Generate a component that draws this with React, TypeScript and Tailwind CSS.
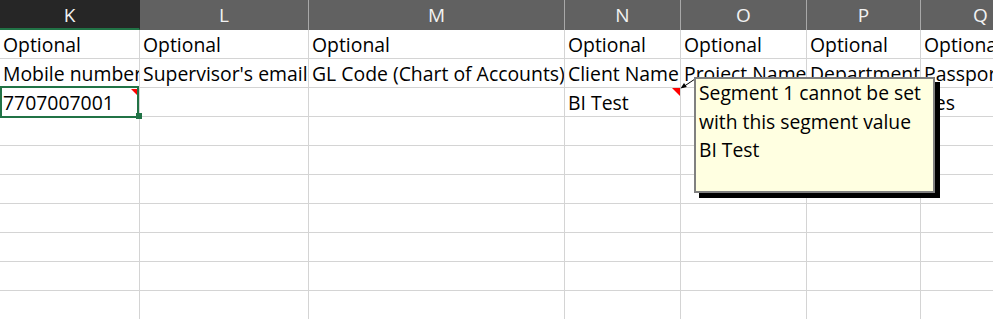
const cols = [
  { name: "K", w: "w-[140px]" },
  { name: "L", w: "w-[169px]" },
  { name: "M", w: "w-[256px]" },
  { name: "N", w: "w-[116px]" },
  { name: "O", w: "w-[126px]" },
  { name: "P", w: "w-[114px]" },
  { name: "Q", w: "w-[120px]" },
];

const rows: string[][] = [
  ["Optional", "Optional", "Optional", "Optional", "Optional", "Optional", "Optional"],
  [
    "Mobile number",
    "Supervisor's email",
    "GL Code (Chart of Accounts)",
    "Client Name",
    "Project Name",
    "Department",
    "Passport Number",
  ],
  ["7707007001", "", "", "BI Test", "", "", "Yes"],
  ["", "", "", "", "", "", ""],
  ["", "", "", "", "", "", ""],
  ["", "", "", "", "", "", ""],
  ["", "", "", "", "", "", ""],
  ["", "", "", "", "", "", ""],
  ["", "", "", "", "", "", ""],
  ["", "", "", "", "", "", ""],
];

// cells that carry a comment marker (row-col)
const comments: Record<string, string> = {
  "2-0": "small",
  "2-3": "big",
};

function CommentMark({ kind }: { kind: string }) {
  if (kind === "small") {
    return (
      <div className="absolute top-[1px] right-[2px] w-0 h-0 border-t-[6px] border-l-[6px] border-t-[#ff0000] border-l-transparent" />
    );
  }
  return (
    <div className="absolute top-0 right-0 w-0 h-0 border-t-[8px] border-l-[8px] border-t-[#ff0000] border-l-transparent" />
  );
}

export default function App() {
  return (
    <div
      className="relative w-[993px] h-[319px] overflow-hidden bg-white text-black text-[19.4px]"
      style={{ fontFamily: '"Open Sans", "Liberation Sans", sans-serif' }}
    >
      {/* column headers */}
      <div className="flex h-[30px] whitespace-nowrap text-[19px]">
        {cols.map((c, i) => (
          <div
            key={c.name}
            className={`${c.w} shrink-0 flex items-center justify-center text-[#f2f2f2] ${
              i === 0
                ? "bg-[#262626] border-r border-r-[#262626] border-b-2 border-b-[#217346] pt-[2px]"
                : "bg-[#616161] border-r border-r-[#a8a8a8]"
            }`}
          >
            {c.name}
          </div>
        ))}
      </div>

      {/* grid */}
      {rows.map((row, r) => (
        <div key={r} className="flex h-[29px]">
          {row.map((val, c) => (
            <div
              key={c}
              className={`${cols[c].w} shrink-0 relative border-r border-b border-[#d4d4d4] pl-[3px] leading-[28px] pt-[1px] whitespace-nowrap overflow-hidden`}
            >
              {val}
              {comments[`${r}-${c}`] && <CommentMark kind={comments[`${r}-${c}`]} />}
            </div>
          ))}
        </div>
      ))}

      {/* active cell K3 */}
      <div className="absolute left-0 top-[86px] w-[139px] h-[32px] border-2 border-[#217346]" />
      <div className="absolute left-[136px] top-[113px] w-[6px] h-[6px] bg-[#217346]" />

      {/* comment arrow */}
      <svg className="absolute left-[676px] top-[72px]" width="30" height="24" viewBox="0 0 30 24">
        <line x1="7" y1="15" x2="22" y2="5" stroke="#000" strokeWidth="1" />
        <polygon points="4.5,16.5 10.8,15.1 8,11" fill="#000" />
      </svg>

      {/* comment box */}
      <div className="absolute left-[694px] top-[77px] w-[241px] h-[116px] bg-[#ffffe1] border-2 border-[#808080] shadow-[5px_5px_0_#000] px-[3px] leading-[28.5px] text-[19.3px]">
        <div>Segment 1 cannot be set</div>
        <div>with this segment value</div>
        <div>BI Test</div>
      </div>
    </div>
  );
}
